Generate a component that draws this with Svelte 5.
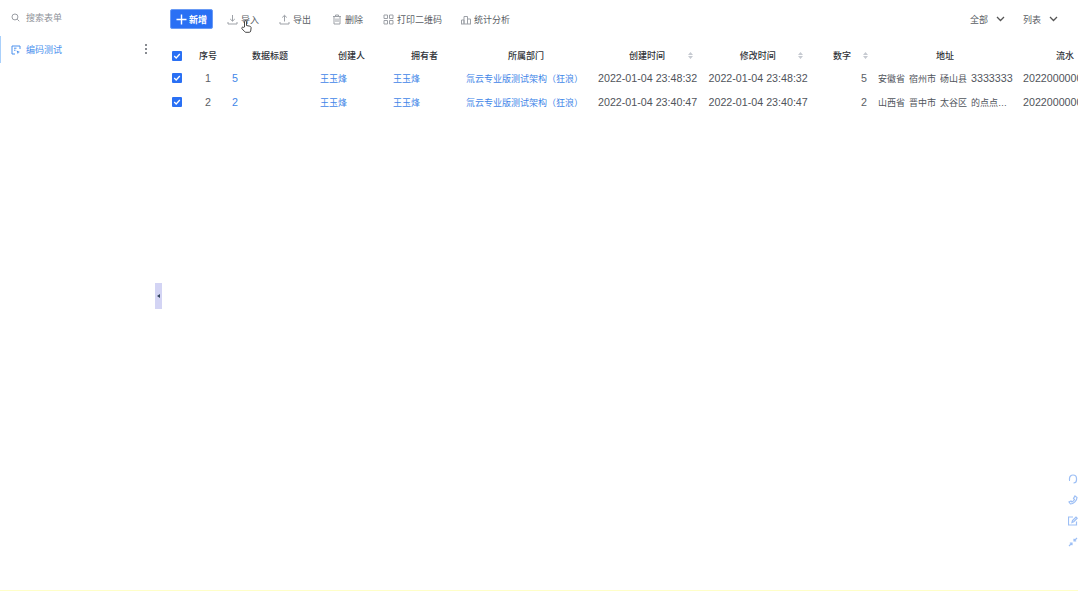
<script>
  const cols = ['序号', '数据标题', '创建人', '拥有者', '所属部门', '创建时间', '修改时间', '数字', '地址', '流水'];
  const sortable = ['创建时间', '修改时间', '数字'];
  const rows = [
    { n: 1, title: '5', user: '王玉烽', dept: '氚云专业版测试架构（狂浪）', created: '2022-01-04 23:48:32', num: 5, addr: '安徽省 宿州市 砀山县 ', tail: '3333333', serial: '2022000000' },
    { n: 2, title: '2', user: '王玉烽', dept: '氚云专业版测试架构（狂浪）', created: '2022-01-04 23:40:47', num: 2, addr: '山西省 晋中市 太谷区 的点点…', tail: '', serial: '2022000000' }
  ];
</script>

<div class="page">
  <aside class="side">
    <div class="search">
      <svg width="9" height="9" viewBox="0 0 10 10"><circle cx="4.4" cy="4.4" r="3.3"/><path d="M7 7l2.2 2.2"/></svg>
      <span>搜索表单</span>
    </div>
    <div class="form-item">
      <svg width="10" height="10" viewBox="0 0 10 10"><path d="M9 4V1H1v8h3"/><path d="M3 3.2h2.5M3 5.2h1.5"/><path d="M5.5 5.5l3.5 1.5-1.5.6-.6 1.6z" class="fill"/></svg>
      <span>编码测试</span>
      <i class="dots"><b></b><b></b><b></b></i>
    </div>
  </aside>

  <button class="collapse" aria-label="收起"><span></span></button>

  <main class="main">
    <div class="toolbar">
      <button class="primary">
        <svg width="11" height="11" viewBox="0 0 11 11"><path d="M5.5 0.5v10M0.5 5.5h10"/></svg>
        新增
      </button>
      <div class="tool w-import">
        <svg width="11" height="11" viewBox="0 0 11 11"><path d="M5.5 1v6M3.2 5l2.3 2.2L7.8 5M1 8v2h9V8"/></svg>
        <span>导入</span>
      </div>
      <div class="tool w-export">
        <svg width="11" height="11" viewBox="0 0 11 11"><path d="M5.5 7.500V1.500M3.2 3.500l2.300-2.200 2.300 2.200M1 8v2h9V8"/></svg>
        <span>导出</span>
      </div>
      <div class="tool w-delete">
        <svg width="10" height="11" viewBox="0 0 10 11"><path d="M1 2.500h8M3.500 2.500V1h3v1.500M2 2.500v7.500h6V2.500M4 4.500v3.500M6 4.500v3.500"/></svg>
        <span>删除</span>
      </div>
      <div class="tool w-print">
        <svg width="11" height="11" viewBox="0 0 11 11"><path d="M1 1h3.500v3.500H1zM6.500 1H10v3.500H6.500zM1 6.500h3.500V10H1zM6.500 6.500H10V10H6.500z"/></svg>
        <span>打印二维码</span>
      </div>
      <div class="tool w-stats">
        <svg width="10" height="11" viewBox="0 0 10 11"><path d="M.5 10V6h2.500v4M3 10V2.500h3.500V10M6.500 10V5h3v5M0 10h10"/></svg>
        <span>统计分析</span>
      </div>
      <div class="spacer"></div>
      <div class="select all">全部
        <svg width="9" height="6" viewBox="0 0 9 6"><path d="M1 1l3.500 3.500L8 1"/></svg>
      </div>
      <div class="select list">列表
        <svg width="9" height="6" viewBox="0 0 9 6"><path d="M1 1l3.500 3.500L8 1"/></svg>
      </div>
    </div>

    <div class="table">
      <div class="row head">
        <div class="cell check"><i class="box"><svg width="8" height="8" viewBox="0 0 8 8"><path d="M1.200 4l2 2 3.600-4"/></svg></i></div>
        {#each cols as c, i}
          <div class="cell h{i}">
            {c}
            {#if sortable.includes(c)}
              <svg class="sort" width="5" height="7" viewBox="0 0 5 7"><path d="M2.500 0L5 3H0zM2.500 7L0 4h5z"/></svg>
            {/if}
          </div>
        {/each}
      </div>
      {#each rows as r}
        <div class="row">
          <div class="cell check"><i class="box"><svg width="8" height="8" viewBox="0 0 8 8"><path d="M1.200 4l2 2 3.600-4"/></svg></i></div>
          <div class="cell seq">{r.n}</div>
          <div class="cell link title">{r.title}</div>
          <div class="cell link zh">{r.user}</div>
          <div class="cell link zh">{r.user}</div>
          <div class="cell link zh">{r.dept}</div>
          <div class="cell time">{r.created}</div>
          <div class="cell time">{r.created}</div>
          <div class="cell num">{r.num}</div>
          <div class="cell addr">{r.addr}<span class="digits">{r.tail}</span></div>
          <div class="cell serial">{r.serial}</div>
        </div>
      {/each}
    </div>
  </main>

  <svg class="cursor" width="11" height="14" viewBox="0 0 11 14">
    <path d="M3.500 7V1.700a1 1 0 0 1 2 0V5.500l3.300.7c.9.2 1.400.9 1.300 1.800l-.4 3c-.1.700-.6 1.300-1.400 1.300H5c-.6 0-1-.2-1.400-.7L1 8.800c-.8-1 .4-2.200 1.400-1.400z"/>
  </svg>

  <div class="float-tools">
    <svg width="10" height="10" viewBox="0 0 10 10"><path d="M1.500 6V4.500a3.500 3.500 0 0 1 7 0V6M8.500 6c0 1.800-1.200 3-3 3"/><path d="M1 4.500h1V7H1zM8 4.500h1V7H8z" class="fill"/></svg>
    <svg width="10" height="10" viewBox="0 0 10 10"><path d="M7 1l2 1.500c0 3-3.500 6.500-6.500 6.500L1 7l2-1 1 1c1-.5 2-1.500 2.500-2.500l-1-1z"/></svg>
    <svg width="10" height="10" viewBox="0 0 10 10"><path d="M8.500 5.500V9h-8V1H5M4 6.500l.5-2L8 1l1.200 1.200-3.500 3.500z"/></svg>
    <svg width="10" height="10" viewBox="0 0 10 10"><path d="M6 4l3-3M6 1.800V4h2.200M4 6l-3 3M1.800 6H4v2.200"/></svg>
  </div>
</div>

<style>
  :global(body) { margin: 0; background: #fff; }
  .page {
    position: relative;
    display: flex;
    width: 1078px;
    height: 591px;
    box-sizing: border-box;
    overflow: hidden;
    border-bottom: 1px solid #ffffc8;
    font-family: "Liberation Sans", "Noto Sans CJK SC", sans-serif;
    font-size: 9px;
    color: #4c5058;
  }
  svg { fill: none; stroke: currentColor; stroke-width: 1; flex: none; }
  svg .fill { fill: currentColor; stroke: none; }

  .side { width: 155px; flex: none; }
  .search {
    display: flex;
    align-items: center;
    gap: 6px;
    height: 18px;
    padding: 8px 0 10px 11px;
    color: #8e9299;
  }
  .form-item {
    position: relative;
    display: flex;
    align-items: center;
    gap: 5px;
    height: 27px;
    padding-left: 11px;
    border-left: 1px solid #a9d0fb;
    color: #4a90ee;
    box-sizing: border-box;
  }
  .form-item svg { margin-left: -1px; }
  .dots {
    position: absolute;
    left: 144px;
    top: 8px;
    display: flex;
    flex-direction: column;
    gap: 2px;
  }
  .dots b { width: 2px; height: 2px; border-radius: 50%; background: #60656c; }

  .collapse {
    position: absolute;
    left: 155px;
    top: 283px;
    width: 7px;
    height: 26px;
    padding: 0;
    border: 0;
    background: #d3d4f4;
    display: flex;
    align-items: center;
    justify-content: center;
  }
  .collapse span {
    width: 0;
    height: 0;
    border-top: 2.500px solid transparent;
    border-bottom: 2.500px solid transparent;
    border-right: 3px solid #34465f;
  }

  .main { flex: 1; min-width: 0; padding-left: 11px; overflow: hidden; }
  .toolbar {
    display: flex;
    align-items: center;
    height: 20px;
    padding-top: 9px;
    color: #5a5e65;
  }
  .primary {
    display: flex;
    align-items: center;
    justify-content: center;
    gap: 2px;
    width: 43px;
    height: 20px;
    margin: 0 0 0 4px;
    padding: 0;
    box-sizing: border-box;
    border: 1px solid #6a9bf5;
    border-radius: 2px;
    background: #2a70f4;
    color: #fff;
    font: 700 9px "Liberation Sans", "Noto Sans CJK SC", sans-serif;
  }
  .primary svg { stroke-width: 1.400; }
  .tool { display: flex; align-items: center; gap: 3px; white-space: nowrap; }
  .tool svg { color: #9da1a7; }
  .w-import { margin-left: 14px; }
  .w-export { margin-left: 20px; }
  .w-delete { margin-left: 21px; }
  .w-print { margin-left: 20px; }
  .w-stats { margin-left: 19px; }
  .spacer { flex: 1; }
  .select { display: flex; align-items: center; gap: 8px; white-space: nowrap; }
  .select svg { color: #555; stroke-width: 1.300; }
  .all { margin-right: 18px; }
  .list { margin-right: 20px; }

  .table { margin-top: 16px; width: 930px; }
  .row {
    display: grid;
    grid-template-columns: 22px 40px 88px 73px 73px 132px 110.500px 110.500px 58px 146px 70px;
    height: 24px;
    align-items: center;
    white-space: nowrap;
  }
  .head { height: 21px; font-weight: 500; color: #2f3238; }
  .cell { padding: 0 4px; overflow: hidden; box-sizing: border-box; position: relative; }
  .head .cell { text-align: center; }
  .head .h1 { padding-left: 0; padding-right: 4px; }
  .head .h2 { padding-left: 0; padding-right: 2px; }
  .head .h3 { padding-left: 0; padding-right: 2px; }
  .head .h4 { padding-right: 8px; }
  .head .h5 { padding-right: 8.500px; }
  .head .h6 { padding-right: 8px; }
  .head .h7 { padding-left: 18px; text-align: left; padding-right: 0; }
  .head .h8 { padding-left: 0; padding-right: 2px; }
  .head .h9 { text-align: left; padding-left: 37px; }
  .sort { position: absolute; top: 50%; margin-top: -4px; fill: #c6cad1; stroke: none; }
  .head .h5 .sort { left: 94px; }
  .head .h6 .sort { left: 93px; }
  .head .h7 .sort { left: 48px; }
  .check { padding: 0; display: flex; justify-content: center; }
  .box {
    display: flex;
    align-items: center;
    justify-content: center;
    width: 10px;
    height: 10px;
    background: #2a70f4;
    border-radius: 1px;
    color: #fff;
  }
  .box svg { stroke-width: 1.300; }
  .seq { text-align: center; font-size: 10.700px; color: #5a5e65; }
  .link { color: #3f86e8; }
  .title { font-size: 10.700px; }
  .time { font-size: 10.700px; padding-right: 0; color: #50545b; }
  .num { text-align: right; padding-right: 6px; font-size: 10.700px; color: #5a5e65; }
  .addr { padding-left: 5px; color: #50545b; word-spacing: 1.500px; }
  .digits { font-size: 10.700px; }
  .serial { font-size: 10.700px; color: #50545b; }

  .cursor {
    position: absolute;
    left: 241px;
    top: 20px;
    fill: #fff;
    stroke: #333;
    stroke-width: 0.900;
  }

  .float-tools {
    position: absolute;
    left: 1068px;
    top: 474px;
    display: flex;
    flex-direction: column;
    gap: 11px;
    color: #9dbff5;
  }
  .float-tools svg { stroke-width: 1.200; }
</style>
